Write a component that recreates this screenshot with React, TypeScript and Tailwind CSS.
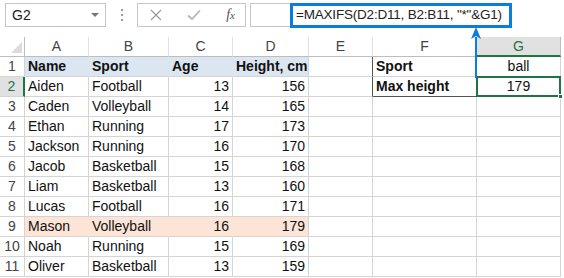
const rows: [string, string, number, number][] = [
  ['Aiden', 'Football', 13, 156],
  ['Caden', 'Volleyball', 14, 165],
  ['Ethan', 'Running', 17, 173],
  ['Jackson', 'Running', 16, 170],
  ['Jacob', 'Basketball', 15, 168],
  ['Liam', 'Basketball', 13, 160],
  ['Lucas', 'Football', 16, 171],
  ['Mason', 'Volleyball', 16, 179],
  ['Noah', 'Running', 15, 169],
  ['Oliver', 'Basketball', 13, 159],
];

const grid = 'grid grid-cols-[25px_64px_80px_64px_76px_64px_104px_84px]';
const cell = 'h-5 border-r border-b border-[#d4d4d4] px-[3px] leading-[19px] whitespace-nowrap overflow-hidden';

function Toolbar() {
  return (
    <div className="relative h-[37px] flex items-start pt-[3px] pl-[5px]">
      {/* name box */}
      <div className="w-[101px] h-6 border border-[#c6c6c6] flex items-center justify-between pl-[6px] pr-[6px] text-[14px] text-[#222]">
        <span>G2</span>
        <span className="w-0 h-0 border-l-[4px] border-r-[4px] border-t-[4px] border-l-transparent border-r-transparent border-t-[#777]" />
      </div>
      {/* dots */}
      <div className="w-[31px] h-6 flex flex-col items-center justify-center gap-[3px]">
        <span className="w-[2px] h-[2px] bg-[#999]" />
        <span className="w-[2px] h-[2px] bg-[#999]" />
        <span className="w-[2px] h-[2px] bg-[#999]" />
      </div>
      {/* cancel / enter / fx */}
      <div className="w-[109px] h-6 border border-[#c6c6c6] flex items-center pl-[12px] pr-[10px] justify-between">
        <svg width="12" height="12" viewBox="0 0 12 12">
          <path d="M1 1 L11 11 M11 1 L1 11" stroke="#9a9a9a" strokeWidth="1.2" />
        </svg>
        <svg width="14" height="12" viewBox="0 0 14 12">
          <path d="M1 6.5 L5 10 L13 1.5" stroke="#b5b5b5" strokeWidth="1.8" fill="none" />
        </svg>
        <span className="font-['Liberation_Serif',serif] italic text-[14px] text-[#555] leading-none">
          f<span className="text-[11px]">x</span>
        </span>
      </div>
      {/* formula bar */}
      <div className="ml-[4px] w-[40px] h-6 border border-[#c6c6c6] border-r-0" />
      <div className="w-[222px] h-[25px] border-[3px] border-[#0b7ce0] flex items-center pl-[3px] text-[13.5px] tracking-[-0.2px] text-[#222] whitespace-nowrap">
        =MAXIFS(D2:D11, B2:B11, "*"&amp;G1)
      </div>
    </div>
  );
}

function ColHeaders() {
  const letters = ['A', 'B', 'C', 'D', 'E', 'F'];
  return (
    <div className={grid}>
      <div className="h-5 border-r border-b border-[#bdbdbd] relative">
        <svg className="absolute right-[2px] bottom-[3px]" width="11" height="11" viewBox="0 0 11 11">
          <path d="M11 0 L11 11 L0 11 Z" fill="#dcdcdc" />
        </svg>
      </div>
      {letters.map((l) => (
        <div key={l} className="h-5 border-r border-b border-r-[#e1e1e1] border-b-[#bdbdbd] text-center text-[14px] text-[#444] leading-[19px]">
          {l}
        </div>
      ))}
      <div className="h-5 border-r border-r-[#bdbdbd] border-b-2 border-b-[#217346] bg-[#e1e1e1] text-center text-[14px] text-[#217346] leading-[19px]">
        G
      </div>
    </div>
  );
}

export default function App() {
  return (
    <div className="relative w-[564px] h-[278px] overflow-hidden bg-white font-['Liberation_Sans',Arial,sans-serif] text-[14px] text-[#111]">
      <Toolbar />
      <ColHeaders />

      {/* row 1 */}
      <div className={grid}>
        <div className="h-5 border-r border-b border-[#d4d4d4] text-center text-[#444] leading-[19px]">1</div>
        <div className={cell + ' bg-[#dce6f1] border-r-[#dce6f1] font-bold'}>Name</div>
        <div className={cell + ' bg-[#dce6f1] border-r-[#dce6f1] font-bold'}>Sport</div>
        <div className={cell + ' bg-[#dce6f1] border-r-[#dce6f1] font-bold'}>Age</div>
        <div className={cell + ' bg-[#dce6f1] font-bold'}>Height, cm</div>
        <div className={cell + ' border-r-[#555]'}></div>
        <div className={cell + ' font-bold'}>Sport</div>
        <div className={cell + ' text-center'}>ball</div>
      </div>

      {rows.map(([name, sport, age, height], i) => {
        const n = i + 2;
        const peach = n === 9;
        const fill = peach ? ' bg-[#fce4d6] border-r-[#fce4d6]' : '';
        return (
          <div key={n} className={grid}>
            {n === 2 ? (
              <div className="h-5 border-b border-[#d4d4d4] border-r-2 border-r-[#217346] bg-[#e1e1e1] text-center text-[#217346] leading-[19px]">2</div>
            ) : (
              <div className="h-5 border-r border-b border-[#d4d4d4] text-center text-[#444] leading-[19px]">{n}</div>
            )}
            <div className={cell + fill}>{name}</div>
            <div className={cell + fill}>{sport}</div>
            <div className={cell + fill + ' text-right'}>{age}</div>
            <div className={cell + (peach ? ' bg-[#fce4d6]' : '') + ' text-right'}>{height}</div>
            <div className={cell + (n === 2 ? ' border-r-[#555]' : '')}></div>
            {n === 2 ? (
              <div className={cell + ' border-b-[#555] font-bold'}>Max height</div>
            ) : (
              <div className={cell}></div>
            )}
            {n === 2 ? (
              <div className={cell + ' relative text-center overflow-visible'}>
                179
                <div className="absolute -left-[1px] -top-[1px] -right-[1px] -bottom-[1px] border-2 border-[#217346]" />
                <div className="absolute -right-[3px] -bottom-[3px] w-[5px] h-[5px] bg-[#217346] border border-white" />
              </div>
            ) : (
              <div className={cell}></div>
            )}
          </div>
        );
      })}

      {/* pointer arrow from formula bar to G1 */}
      <svg className="absolute left-[469px] top-[27px]" width="14" height="51" viewBox="0 0 14 51">
        <path d="M7 10 L7 51" stroke="#0b7ce0" strokeWidth="2" />
        <path d="M7 0 L12 12 L7 9 L2 12 Z" fill="#0b7ce0" />
      </svg>
    </div>
  );
}
